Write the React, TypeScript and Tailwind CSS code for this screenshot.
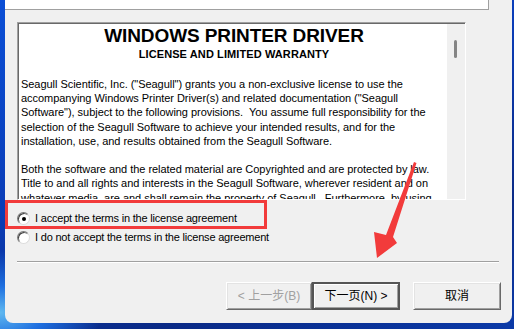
import React from "react";

const bodyLines1 = [
  'Seagull Scientific, Inc. ("Seagull") grants you a non-exclusive license to use the',
  'accompanying Windows Printer Driver(s) and related documentation ("Seagull',
  'Software"), subject to the following provisions.  You assume full responsibility for the',
  "selection of the Seagull Software to achieve your intended results, and for the",
  "installation, use, and results obtained from the Seagull Software.",
];
const bodyLines2 = [
  "Both the software and the related material are Copyrighted and are protected by law.",
  "Title to and all rights and interests in the Seagull Software, wherever resident and on",
  "whatever media, are and shall remain the property of Seagull.  Furthermore, by using",
  "this software you agree to the terms of this license.",
];

function Radio({ checked }: { checked?: boolean }) {
  return (
    <div className="w-[13px] h-[13px] rounded-full border border-t-[#7a7a7a] border-l-[#7a7a7a] border-r-[#dcdcdc] border-b-[#dcdcdc] bg-white flex items-center justify-center shadow-[inset_1px_1px_0_#404040]">
      {checked && <div className="w-[4px] h-[4px] rounded-full bg-black" />}
    </div>
  );
}

function Button({
  children,
  width,
  disabled,
  isDefault,
}: {
  children: React.ReactNode;
  width: string;
  disabled?: boolean;
  isDefault?: boolean;
}) {
  return (
    <div
      className={
        "h-[28px] flex items-center justify-center text-[12px] bg-[#f0f0f0] " +
        width +
        (isDefault
          ? " border-2 border-[#555555] shadow-[inset_1px_1px_0_#ffffff,inset_-1px_-1px_0_#a0a0a0]"
          : " border border-t-white border-l-white border-r-[#696969] border-b-[#696969] shadow-[inset_1px_1px_0_#e3e3e3,inset_-1px_-1px_0_#a0a0a0]") +
        (disabled ? " text-[#a0a0a0]" : " text-black")
      }
    >
      {children}
    </div>
  );
}

export default function App() {
  return (
    <div
      className="relative w-[514px] h-[329px] overflow-hidden bg-[radial-gradient(ellipse_at_0%_95%,#5fb8f0_0%,#1e6fe0_6%,transparent_14%),linear-gradient(160deg,#0b4fd6_0%,#0a3db8_40%,#0a2a86_75%,#0b3aa8_100%)]"
      style={{ fontFamily: '"Liberation Sans", Arial, "Noto Sans CJK SC", sans-serif' }}
    >
      <div className="flex pl-[5px]">
        <div className="w-[507px] h-[323px] bg-[#f0f0f0] rounded-b-[8px] flex flex-col">
          {/* header */}
          <div className="w-[484px] h-[10px] bg-white border-b border-r border-[#a0a0a0]" />

          {/* license text box */}
          <div className="ml-[12px] mt-[12px] w-[449px] h-[178px] border-t border-l border-[#a0a0a0] border-r border-b border-r-white border-b-white">
            <div className="w-full h-full flex border-t border-l border-[#696969] border-r-0 border-b-0">
              <div className="flex-1 bg-white overflow-hidden pl-[2px] pt-[1px] text-black">
                <div className="text-center text-[19px] leading-[22px] font-bold tracking-[-0.1px]">
                  WINDOWS PRINTER DRIVER
                </div>
                <div className="text-center text-[11px] leading-[14px] font-bold tracking-[0.1px]">
                  LICENSE AND LIMITED WARRANTY
                </div>
                <div className="mt-[16px] text-[11px] leading-[14.2px] tracking-[-0.04px]">
                  {bodyLines1.map((l, i) => (
                    <div key={i} className="whitespace-pre">
                      {l}
                    </div>
                  ))}
                  <div className="h-[14.2px]" />
                  {bodyLines2.map((l, i) => (
                    <div key={i} className="whitespace-pre">
                      {l}
                    </div>
                  ))}
                </div>
              </div>
              <div className="w-[18px] bg-[#f0f0f0] relative">
                <div className="absolute left-[7px] top-[16px] w-[3px] h-[18px] rounded-full bg-[#858585]" />
              </div>
            </div>
          </div>

          {/* radio options */}
          <div className="mt-[9px] ml-[12px] flex flex-col text-[11px] tracking-[-0.2px]">
            <div className="h-[19px] flex items-center gap-[5px]">
              <Radio checked />
              <span>I accept the terms in the license agreement</span>
            </div>
            <div className="h-[19px] flex items-center gap-[5px]">
              <Radio />
              <span>I do not accept the terms in the license agreement</span>
            </div>
          </div>

          {/* separator */}
          <div className="mt-[14px] ml-[12px] w-[482px] h-[2px] border-t border-[#a0a0a0] border-b border-b-white" />

          {/* buttons */}
          <div className="mt-[19px] flex justify-end pr-[11px]">
            <Button width="w-[86px]" disabled>
              &lt; 上一步(B)
            </Button>
            <Button width="w-[88px]" isDefault>
              下一页(N) &gt;
            </Button>
            <div className="w-[13px]" />
            <Button width="w-[88px]">取消</Button>
          </div>
        </div>
      </div>

      {/* red highlight box (annotation) */}
      <div className="absolute left-[5px] top-[200px] w-[262px] h-[29px] border-[3px] border-[#f23b3b]" />

      {/* red arrow (annotation) */}
      <svg className="absolute left-0 top-0" width="514" height="329" viewBox="0 0 514 329">
        <polygon
          points="414,162 416.5,163 393,237 397,243 377,258 374,232 386,235"
          fill="#f23b3b"
        />
      </svg>
    </div>
  );
}
